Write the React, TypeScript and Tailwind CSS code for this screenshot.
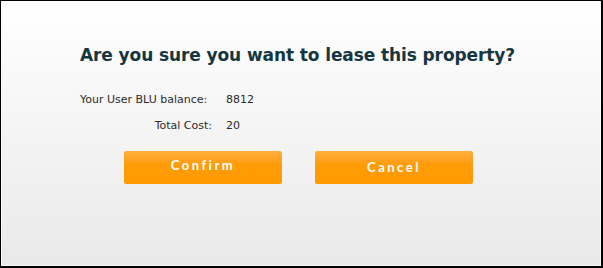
export default function App() {
  return (
    <div className="w-[603px] h-[268px] border-t border-l border-r-2 border-b-2 border-black bg-gradient-to-b from-white to-[#e9e9e9] font-['DejaVu_Sans',Verdana,sans-serif]">
      <div className="h-full border border-white/70 pl-[78px] pt-[41px]">
        <h1 className="text-[17px] font-bold leading-[24px] tracking-[-0.1px] text-[#15363f]">
          Are you sure you want to lease this property?
        </h1>

        <div className="mt-[26px] grid grid-cols-[132px_auto] gap-x-[14px] gap-y-[12px] text-[11px] leading-[14px] text-[#2b2b2b]">
          <span className="whitespace-nowrap">Your User BLU balance:</span>
          <span>8812</span>
          <span className="text-right">Total Cost:</span>
          <span>20</span>
        </div>

        <div className="flex gap-[33px] ml-[44px] mt-[18px]">
          <button className="w-[158px] h-[33px] rounded-[2px] bg-gradient-to-b from-[#ffb03a] via-[#ff9c07] via-40% to-[#ff9900] text-white font-['Lato',sans-serif] font-bold text-[13px] tracking-[2.5px] pb-[3px]">
            Confirm
          </button>
          <button className="w-[158px] h-[33px] rounded-[2px] bg-gradient-to-b from-[#ffb03a] via-[#ff9c07] via-40% to-[#ff9900] text-white font-['Lato',sans-serif] font-bold text-[13px] tracking-[2.5px] pt-[1px]">
            Cancel
          </button>
        </div>
      </div>
    </div>
  )
}
